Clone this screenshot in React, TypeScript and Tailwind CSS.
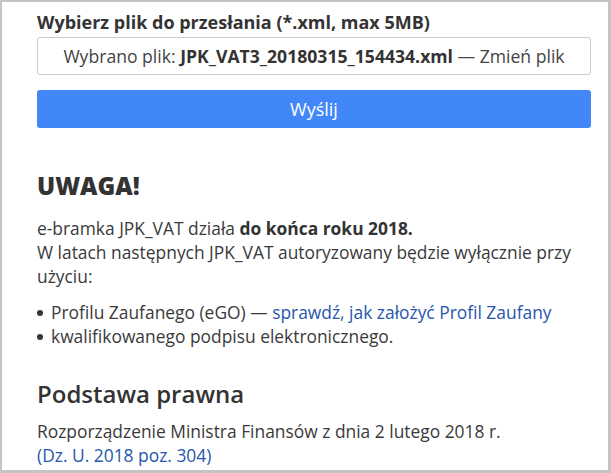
import React from "react";

function Dot() {
  return <span className="inline-block w-[6px] h-[6px] rounded-full bg-[#333] mr-[8px] align-middle relative top-[-1px]" />;
}

export default function App() {
  return (
    <div
      className="w-[611px] h-[473px] bg-white border-l-2 border-t-2 border-r-[3px] border-b-[3px] border-[#c4c4c4] text-[#3a3a3a] overflow-hidden"
      style={{ fontFamily: '"Open Sans", sans-serif' }}
    >
      <div className="pl-[35px] pr-[17px] pt-[8px]">
        <div className="text-[18px] font-bold leading-[24px] text-[#333]">
          Wybierz plik do przesłania (*.xml, max 5MB)
        </div>
        <div className="mt-[3px] h-[38px] border border-[#ccc] rounded-[3px] flex items-center justify-center text-[17.6px] text-[#444]">
          <span>
            Wybrano plik: <b className="font-bold text-[#333]">JPK_VAT3_20180315_154434.xml</b> — Zmień plik
          </span>
        </div>
        <button className="mt-[15px] w-full h-[38px] bg-[#4287f7] rounded-[3px] text-white text-[18px] flex items-center justify-center">
          Wyślij
        </button>

        <h2 className="mt-[42px] text-[24px] font-extrabold leading-[32px] text-[#333]">UWAGA!</h2>
        <div className="mt-[14px] text-[17.4px] leading-[24px]">
          <p>
            e-bramka JPK_VAT działa <b className="font-bold text-[#333]">do końca roku 2018.</b>
          </p>
          <p>W latach następnych JPK_VAT autoryzowany będzie wyłącznie przy użyciu:</p>
          <ul className="mt-[12px]">
            <li>
              <Dot />Profilu Zaufanego (eGO) — <span className="text-[#2856ad]">sprawdź, jak założyć Profil Zaufany</span>
            </li>
            <li>
              <Dot />kwalifikowanego podpisu elektronicznego.
            </li>
          </ul>
        </div>

        <h2 className="mt-[30px] text-[24px] font-semibold leading-[32px] text-[#333]">Podstawa prawna</h2>
        <div className="mt-[9px] text-[17.4px] leading-[24px]">
          <p>Rozporządzenie Ministra Finansów z dnia 2 lutego 2018 r.</p>
          <p className="text-[#2856ad]">(Dz. U. 2018 poz. 304)</p>
        </div>
      </div>
    </div>
  );
}
